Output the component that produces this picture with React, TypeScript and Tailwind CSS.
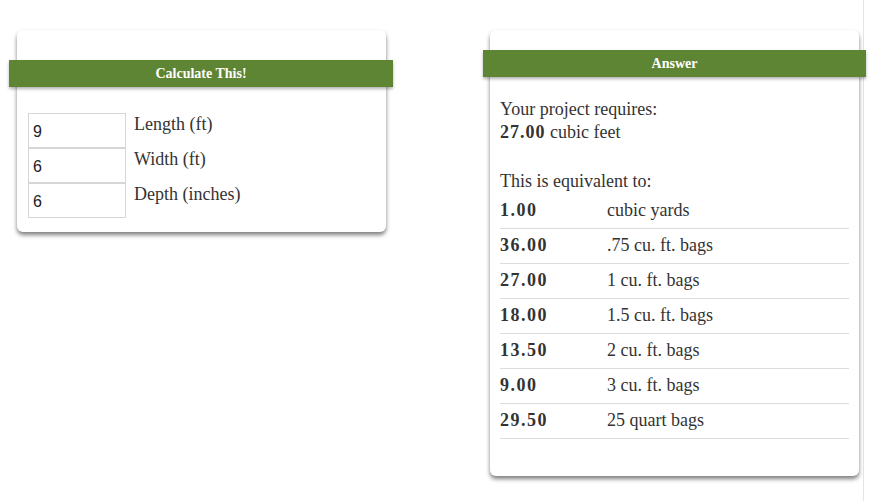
import React from 'react';

const rows: [string, string][] = [
  ['1.00', 'cubic yards'],
  ['36.00', '.75 cu. ft. bags'],
  ['27.00', '1 cu. ft. bags'],
  ['18.00', '1.5 cu. ft. bags'],
  ['13.50', '2 cu. ft. bags'],
  ['9.00', '3 cu. ft. bags'],
  ['29.50', '25 quart bags'],
];

const fields: [string, string][] = [
  ['9', 'Length (ft)'],
  ['6', 'Width (ft)'],
  ['6', 'Depth (inches)'],
];

const App: React.FC = () => {
  return (
    <div className="relative w-[864px] h-[501px] bg-white text-[#333] font-['Liberation_Serif',serif] border-r border-[#e4e4e4]">
      <div className="flex items-start gap-[104px] pl-[17px] pt-[30px]">
        {/* Calculator */}
        <div className="w-[369px] bg-white rounded-md shadow-[0_3px_4px_rgba(0,0,0,0.5)] pt-[30px] pb-[14px]">
          <div className="-ml-[8px] -mr-[7px] h-[27px] bg-[#5e8534] shadow-[0_2px_3px_rgba(0,0,0,0.3)] flex items-center justify-center text-white text-[14px] font-bold">
            Calculate This!
          </div>
          <div className="pt-[26px] pl-[11px] flex flex-col">
            {fields.map(([v, label]) => (
              <div key={label} className="flex items-start h-[35px]">
                <input
                  readOnly
                  value={v}
                  className="w-[98px] h-[35px] border border-[#d6d6d6] px-[4px] pt-[3px] text-[16px] font-['Liberation_Sans',sans-serif] text-[#222] outline-none"
                />
                <span className="ml-[8px] text-[18px] leading-[23px]">{label}</span>
              </div>
            ))}
          </div>
        </div>

        {/* Answer */}
        <div className="w-[369px] bg-white rounded-md shadow-[0_3px_4px_rgba(0,0,0,0.5)] pt-[20px] pb-[37px]">
          <div className="-mx-[7px] h-[27px] bg-[#5e8534] shadow-[0_2px_3px_rgba(0,0,0,0.3)] flex items-center justify-center text-white text-[14px] font-bold">
            Answer
          </div>
          <div className="px-[10px] pt-[21px] text-[18px] leading-[23px]">
            <p>Your project requires:</p>
            <p className="mb-[26px]">
              <b className="tracking-[1px]">27.00</b> cubic feet
            </p>
            <p>This is equivalent to:</p>
            <table className="w-full border-collapse">
              <tbody>
                {rows.map(([n, unit]) => (
                  <tr key={unit} className="h-[35px] border-b border-[#dcdcdc]">
                    <td className="w-[107px] font-bold tracking-[1.5px]">{n}</td>
                    <td>{unit}</td>
                  </tr>
                ))}
              </tbody>
            </table>
          </div>
        </div>
      </div>
    </div>
  );
};

export default App;
